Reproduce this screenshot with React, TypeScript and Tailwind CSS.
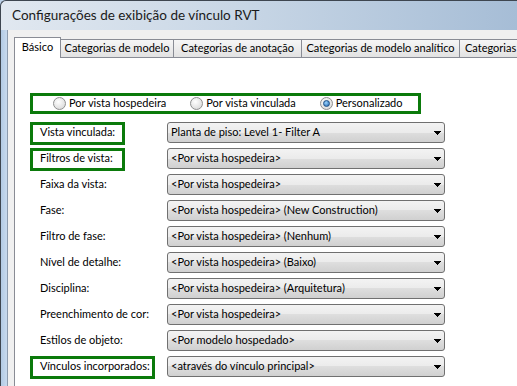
import type { ReactNode } from "react";

type Row = {
  label: string;
  value: string;
  highlight?: boolean;
  boxWidth?: string;
};

const rows: Row[] = [
  { label: "Vista vinculada:", value: "Planta de piso: Level 1- Filter A", highlight: true },
  { label: "Filtros de vista:", value: "<Por vista hospedeira>", highlight: true },
  { label: "Faixa da vista:", value: "<Por vista hospedeira>" },
  { label: "Fase:", value: "<Por vista hospedeira> (New Construction)" },
  { label: "Filtro de fase:", value: "<Por vista hospedeira> (Nenhum)" },
  { label: "Nível de detalhe:", value: "<Por vista hospedeira> (Baixo)" },
  { label: "Disciplina:", value: "<Por vista hospedeira> (Arquitetura)" },
  { label: "Preenchimento de cor:", value: "<Por vista hospedeira>" },
  { label: "Estilos de objeto:", value: "<Por modelo hospedado>" },
  { label: "Vínculos incorporados:", value: "<através do vínculo principal>", highlight: true, boxWidth: "w-[125px]" },
];

const tabs = [
  { label: "Categorias de modelo", width: "w-[114px]" },
  { label: "Categorias de anotação", width: "w-[129px]" },
  { label: "Categorias de modelo analítico", width: "w-[159px]" },
];

function Radio({ checked, children }: { checked?: boolean; children: ReactNode }) {
  return (
    <label className="flex shrink-0 items-center gap-[3px] whitespace-nowrap">
      <span className="flex h-[13px] w-[13px] shrink-0 items-center justify-center rounded-full border border-[#8e8f8f] bg-[radial-gradient(circle_at_40%_35%,#ffffff,#d2d2d2)]">
        {checked && (
          <span className="h-[7px] w-[7px] rounded-full border border-[#1c4f86] bg-[radial-gradient(circle_at_40%_35%,#9ad4ff,#1f63ad)]" />
        )}
      </span>
      <span>{children}</span>
    </label>
  );
}

function Combo({ value }: { value: string }) {
  return (
    <div className="flex h-[21px] w-[278px] shrink-0 items-center justify-between rounded-[3px] border border-[#707070] bg-[linear-gradient(#f3f3f3,#ebebeb_50%,#dedede_50%,#d0d0d0)] pl-[3px] pr-[3px]">
      <span className="whitespace-pre">{value}</span>
      <svg width="7" height="4" viewBox="0 0 7 4">
        <path d="M0 0h7v1H6v1H5v1H4v1H3V3H2V2H1V1H0z" fill="#000" />
      </svg>
    </div>
  );
}

export default function App() {
  return (
    <div className="relative h-[386px] w-[517px] overflow-hidden bg-[#bcd1e8] font-['Lato',sans-serif] text-[11px] text-black">
      <div className="flex h-[30px] items-center rounded-tl-[6px] border-l border-t border-[#3e4650] bg-[linear-gradient(90deg,#e1e8f0,#c9d7e6_45%,#a6bdd6)] pl-[11px]">
        <span className="text-[13.5px] text-[#1a1a1a]">Configurações de exibição de vínculo RVT</span>
      </div>

      <div className="flex h-[356px] border-l border-[#3e4650]">
        <div className="w-[6px] shrink-0 bg-[linear-gradient(90deg,#b3cbe5,#c8daee)]" />
        <div className="min-w-0 flex-1 border-l border-[#8c9bae] bg-[#f0f0f0] pl-[6px] pt-[7px]">
          <div className="flex h-[20px] items-end">
            <div className="relative z-10 -mb-px flex h-[21px] w-[47px] shrink-0 items-center justify-center border border-b-0 border-[#898c95] bg-white pb-[2px]">
              Básico
            </div>
            {tabs.map((tab) => (
              <div
                key={tab.label}
                className={`-ml-px flex h-[18px] ${tab.width} shrink-0 items-center justify-center whitespace-nowrap border border-b-0 border-[#898c95] bg-[linear-gradient(#f6f6f6,#e2e2e2)]`}
              >
                {tab.label}
              </div>
            ))}
            <div className="-ml-px flex h-[18px] w-[80px] shrink-0 items-center whitespace-nowrap border border-b-0 border-[#898c95] bg-[linear-gradient(#f6f6f6,#e2e2e2)] pl-[5px]">
              Categorias
            </div>
          </div>

          <div className="h-full border-l border-t border-[#898c95] bg-white pl-[15px] pt-[35px]">
            <div className="flex h-[21px] w-[391px] items-center gap-[24px] border-[3px] border-[#0b7a0b] pl-[20px]">
              <Radio>Por vista hospedeira</Radio>
              <Radio>Por vista vinculada</Radio>
              <Radio checked>Personalizado</Radio>
            </div>

            <div className="mt-[8px] flex flex-col">
              {rows.map((row) => (
                <div key={row.label} className="flex h-[26px] items-start">
                  <div className="w-[137px] shrink-0">
                    <div
                      className={`flex h-[23px] ${row.boxWidth ?? "w-[95px]"} items-center whitespace-nowrap border-[3px] pb-[2px] pl-[7px] ${
                        row.highlight ? "border-[#0b7a0b]" : "border-transparent"
                      }`}
                    >
                      {row.label}
                    </div>
                  </div>
                  <Combo value={row.value} />
                </div>
              ))}
            </div>
          </div>
        </div>
      </div>
    </div>
  );
}
